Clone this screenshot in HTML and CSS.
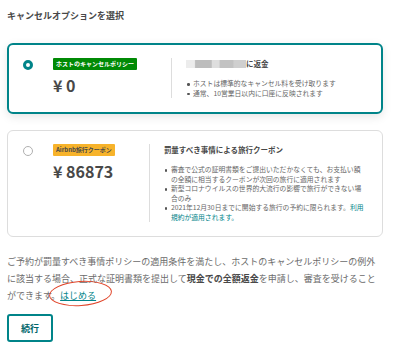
FILE: index.html
```html
<!DOCTYPE html>
<html lang="ja">
<head>
    <meta charset="UTF-8">
    <title>キャンセルオプションを選択</title>
    <link rel="stylesheet" href="styles.css">
</head>
<body>
    <div class="page">
        <h2 class="heading">キャンセルオプションを選択</h2>

        <!-- Host policy option (selected) -->
        <div class="option option-selected">
            <div class="option-main">
                <span class="radio radio-on"></span>
                <div class="option-price">
                    <span class="badge badge-green">ホストのキャンセルポリシー</span>
                    <div class="amount">¥ 0</div>
                </div>
            </div>
            <div class="option-detail">
                <div class="detail-title"><span class="redacted"></span>に返金</div>
                <ul class="detail-list">
                    <li>ホストは標準的なキャンセル料を受け取ります</li>
                    <li>通常、10営業日以内に口座に反映されます</li>
                </ul>
            </div>
        </div>

        <!-- Coupon option -->
        <div class="option">
            <div class="option-main">
                <span class="radio"></span>
                <div class="option-price">
                    <span class="badge badge-orange">Airbnb旅行クーポン</span>
                    <div class="amount">¥ 86873</div>
                </div>
            </div>
            <div class="option-detail">
                <div class="detail-title">罰量すべき事情による旅行クーポン</div>
                <ul class="detail-list">
                    <li>審査で公式の証明書類をご提出いただかなくても、お支払い額の全額に相当するクーポンが次回の旅行に適用されます</li>
                    <li>新型コロナウイルスの世界的大流行の影響で旅行ができない場合のみ</li>
                    <li>2021年12月30日までに開始する旅行の予約に限られます。<a class="detail-link" href="#">利用規約が適用されます。</a></li>
                </ul>
            </div>
        </div>

        <p class="note">
            ご予約が罰量すべき事情ポリシーの適用条件を満たし、ホストのキャンセルポリシーの例外に該当する場合、正式な証明書類を提出して<strong>現金での全額返金</strong>を申請し、審査を受けることができます。<a class="start-link" href="#">はじめる</a>
        </p>

        <button class="continue-btn">続行</button>
    </div>
</body>
</html>
```

FILE: styles.css
```css
body {
    margin: 0;
    background: #ffffff;
    font-family: "Noto Sans CJK JP", "Noto Sans", sans-serif;
    color: #484848;
}

.page {
    width: 376px;
    padding: 9px 17px 0 7px;
}

.heading {
    margin: 0 0 21px 0;
    font-size: 9px;
    line-height: 13px;
    font-weight: bold;
    color: #484848;
}

.option {
    display: flex;
    align-items: flex-start;
    border: 1px solid #dddddd;
    border-radius: 6px;
    padding: 13px 18px 14px 15px;
    margin-bottom: 16px;
    background: #ffffff;
}

.option-selected {
    border: 2px solid #008489;
    padding: 13px 17px 14px 14px;
    box-shadow: 0 3px 10px rgba(0, 0, 0, 0.1);
}

.option-main {
    display: flex;
    align-items: flex-start;
    gap: 20px;
    padding-right: 34px;
}

.radio {
    width: 10px;
    height: 10px;
    box-sizing: border-box;
    border-radius: 50%;
    border: 1px solid #b0b0b0;
    margin-top: 2px;
    flex-shrink: 0;
}

.radio-on {
    border: 3px solid #008489;
}

.option-price {
    display: flex;
    flex-direction: column;
    align-items: flex-start;
}

.badge {
    font-size: 6px;
    line-height: 12px;
    height: 12px;
    padding: 0 3px;
    border-radius: 1px;
    font-weight: bold;
    white-space: nowrap;
}

.badge-green {
    background: #008a05;
    color: #ffffff;
}

.badge-orange {
    background: #f7b32b;
    color: #484848;
}

.amount {
    margin-top: 5px;
    font-size: 16px;
    line-height: 20px;
    font-weight: bold;
    color: #484848;
}

.option-detail {
    flex: 1;
    border-left: 1px solid #dddddd;
    padding-left: 14px;
}

.detail-title {
    font-size: 7.5px;
    line-height: 11px;
    font-weight: bold;
    color: #484848;
    margin-bottom: 10px;
}

.redacted {
    display: inline-block;
    width: 60px;
    height: 8px;
    vertical-align: -1px;
    background: linear-gradient(to right, #ececec 0, #ececec 14%, #bdbdbd 16%, #bdbdbd 42%, #dedede 44%, #dedede 55%, #c2c2c2 57%, #c2c2c2 78%, #cfcfcf 80%, #cfcfcf 100%);
    filter: blur(0.4px);
}

.detail-list {
    list-style: none;
    margin: 0;
    padding: 0;
}

.detail-list li {
    position: relative;
    padding-left: 7px;
    font-size: 6.8px;
    line-height: 9.5px;
    color: #666666;
}

.detail-list li::before {
    content: "";
    position: absolute;
    left: 1px;
    top: 4px;
    width: 2.5px;
    height: 2.5px;
    border-radius: 50%;
    background: #555555;
}

.detail-link {
    color: #008489;
    text-decoration: none;
}

.note {
    margin: 10px 0 0 0;
    font-size: 9px;
    line-height: 17px;
    color: #6b6b6b;
}

.note strong {
    color: #484848;
}

.start-link {
    position: relative;
    color: #008489;
    text-decoration: underline;
}

/* red annotation ring around the link */
.start-link::after {
    content: "";
    position: absolute;
    left: -11px;
    top: -8px;
    width: 61px;
    height: 23px;
    border: 1.5px solid #e0452a;
    border-radius: 50%;
    transform: rotate(-4deg);
}

.continue-btn {
    margin-top: 10px;
    height: 28px;
    padding: 0 12px;
    border: 2px solid #008489;
    border-radius: 3px;
    background: #ffffff;
    font-family: "Noto Sans CJK JP", "Noto Sans", sans-serif;
    font-size: 9px;
    font-weight: bold;
    color: #00666b;
    cursor: pointer;
}
```
